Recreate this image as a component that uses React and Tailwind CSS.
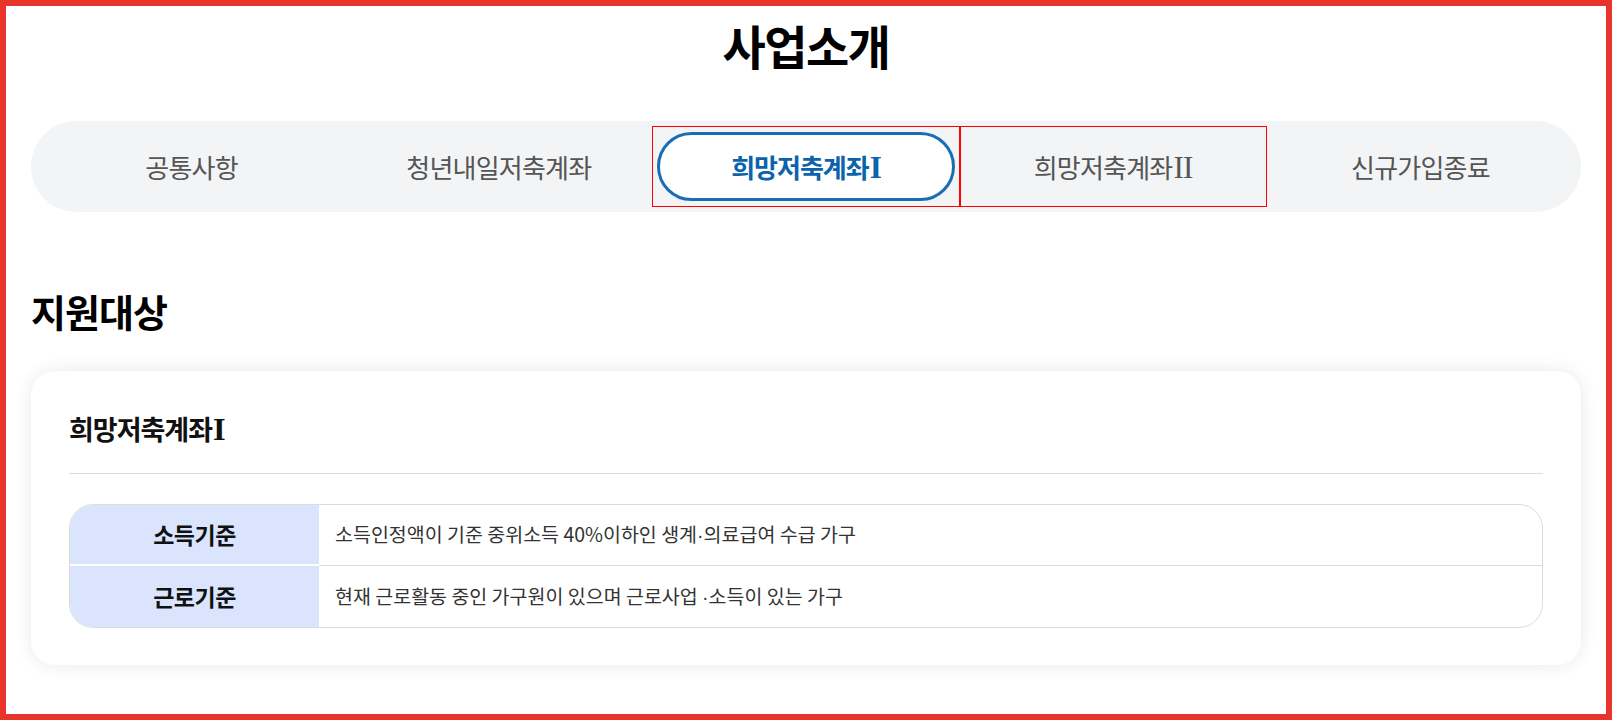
import React from "react";

const Serif = ({ children }) => (
  <span className="ml-[1px] text-[1.2em] leading-none" style={{ fontFamily: '"Liberation Serif", serif' }}>
    {children}
  </span>
);

const tabs = [
  { key: "a", label: "공통사항" },
  { key: "b", label: "청년내일저축계좌" },
  { key: "c", label: <>희망저축계좌<Serif>I</Serif></> },
  { key: "d", label: <>희망저축계좌<Serif>II</Serif></> },
  { key: "e", label: "신규가입종료" },
];

const Dot = () => <span style={{ fontFamily: '"Liberation Sans", sans-serif' }}>·</span>;

const rows = [
  {
    label: "소득기준",
    value: (
      <>
        소득인정액이 기준 중위소득 40%이하인 생계<Dot />의료급여 수급 가구
      </>
    ),
  },
  {
    label: "근로기준",
    value: (
      <>
        현재 근로활동 중인 가구원이 있으며 근로사업 <Dot />소득이 있는 가구
      </>
    ),
  },
];

const App = () => {
  return (
    <div
      className="h-[720px] w-full overflow-hidden border-[6px] border-[#e8352c] bg-white text-[#111]"
      style={{ fontFamily: '"Noto Sans CJK KR", "Noto Sans", sans-serif' }}
    >
      <div className="px-[25px]">
        <h1 className="pt-[12px] text-center text-[47px] font-bold leading-[54px] tracking-[-1.5px] text-black">
          사업소개
        </h1>

        <div className="mt-[49px] flex h-[91px] rounded-full bg-[#f3f4f6] px-[7px] py-[5px]">
          {tabs.map((tab, i) => (
            <div
              key={tab.key}
              className={
                i === 2 || i === 3
                  ? "flex flex-1 items-center justify-center ring-1 ring-inset ring-[#ff0000]"
                  : "flex flex-1 items-center justify-center"
              }
            >
              {i === 2 ? (
                <div className="m-[5px] flex h-[69px] w-full items-center justify-center rounded-full border-[3px] border-[#1a6db4] bg-white text-[26px] font-bold tracking-[-1px] text-[#0b63ad]">
                  <span>{tab.label}</span>
                </div>
              ) : (
                <span className="text-[26px] tracking-[-0.8px] text-[#555]">{tab.label}</span>
              )}
            </div>
          ))}
        </div>

        <h2 className="mt-[76px] text-[38px] font-bold leading-[46px] tracking-[-1px] text-black">
          지원대상
        </h2>

        <div className="mt-[37px] rounded-[24px] bg-white px-[38px] pb-[37px] pt-[40px] shadow-[0_0_18px_rgba(0,0,0,0.09)]">
          <h3 className="border-b border-[#dcdcdc] pb-[26px] text-[27px] font-bold leading-[36px] tracking-[-1px]">
            희망저축계좌<Serif>I</Serif>
          </h3>

          <div className="mt-[30px] overflow-hidden rounded-[24px] border border-[#dcdcdc]">
            {rows.map((row, i) => (
              <div key={row.label} className="flex h-[61px]">
                <div
                  className={
                    i === 0
                      ? "flex w-[249px] items-center justify-center border-b-2 border-white bg-[#dbe4fd] text-[23px] font-bold tracking-[-0.5px]"
                      : "flex w-[249px] items-center justify-center bg-[#dbe4fd] text-[23px] font-bold tracking-[-0.5px]"
                  }
                >
                  {row.label}
                </div>
                <div
                  className={
                    i === 0
                      ? "flex flex-1 items-center border-b border-[#dcdcdc] pl-[16px] text-[19.5px] text-[#333]"
                      : "flex flex-1 items-center pl-[16px] text-[19.5px] text-[#333]"
                  }
                >
                  <span>{row.value}</span>
                </div>
              </div>
            ))}
          </div>
        </div>
      </div>
    </div>
  );
};

export default App;
